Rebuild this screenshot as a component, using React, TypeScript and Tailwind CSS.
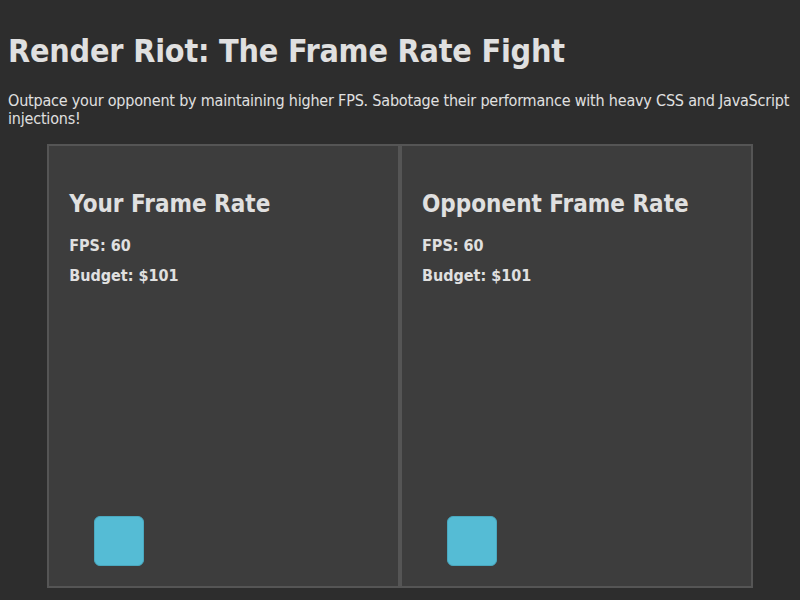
import React from "react";

const font = { fontFamily: '"DejaVu Sans Condensed", "DejaVu Sans", sans-serif' };

function Arena({ title }: { title: string }) {
  return (
    <div className="w-[45%] h-[444px] bg-[#3d3d3d] border-2 border-[#555555] p-5 flex flex-col">
      <h2 className="mt-[24px] text-[24px] leading-[28px] font-bold text-[#e0e0e0]">{title}</h2>
      <p className="mt-[18px] text-[16px] leading-[19px] font-bold text-[#e0e0e0]">FPS: 60</p>
      <p className="mt-[11px] text-[16px] leading-[19px] font-bold text-[#e0e0e0]">Budget: $101</p>
      {/* player block */}
      <div className="mt-auto ml-[25px] w-[50px] h-[50px] rounded-md bg-[#55bcd5] border border-[#4aa8bf]" />
    </div>
  );
}

export default function App() {
  return (
    <div className="min-h-[600px] bg-[#2d2d2d] text-[#e0e0e0] p-2" style={font}>
      <h1 className="mt-[24px] text-[32px] leading-[38px] font-bold tracking-[-0.2px]">Render Riot: The Frame Rate Fight</h1>
      <p className="mt-[22px] text-[16px] leading-[18px] tracking-[-0.2px]">
        Outpace your opponent by maintaining higher FPS. Sabotage their performance with heavy CSS and JavaScript
        injections!
      </p>
      <div className="mt-4 flex justify-center">
        <Arena title="Your Frame Rate" />
        <Arena title="Opponent Frame Rate" />
      </div>
    </div>
  );
}
